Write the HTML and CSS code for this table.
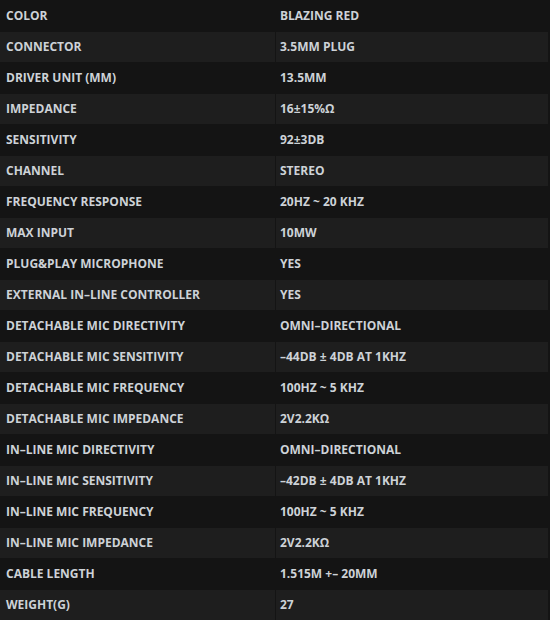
FILE: index.html
```html
<!DOCTYPE html>
<html>
<head>
<meta charset="utf-8">
<link rel="stylesheet" href="styles.css">
</head>
<body>
<table class="specs">
<tbody>
<tr><td class="k">COLOR</td><td class="v">BLAZING RED</td></tr>
<tr><td class="k">CONNECTOR</td><td class="v">3.5MM PLUG</td></tr>
<tr><td class="k">DRIVER UNIT (MM)</td><td class="v">13.5MM</td></tr>
<tr><td class="k">IMPEDANCE</td><td class="v">16±15%Ω</td></tr>
<tr><td class="k">SENSITIVITY</td><td class="v">92±3DB</td></tr>
<tr><td class="k">CHANNEL</td><td class="v">STEREO</td></tr>
<tr><td class="k">FREQUENCY RESPONSE</td><td class="v">20HZ ~ 20 KHZ</td></tr>
<tr><td class="k">MAX INPUT</td><td class="v">10MW</td></tr>
<tr><td class="k">PLUG&amp;PLAY MICROPHONE</td><td class="v">YES</td></tr>
<tr><td class="k">EXTERNAL IN–LINE CONTROLLER</td><td class="v">YES</td></tr>
<tr><td class="k">DETACHABLE MIC DIRECTIVITY</td><td class="v">OMNI–DIRECTIONAL</td></tr>
<tr><td class="k">DETACHABLE MIC SENSITIVITY</td><td class="v">–44DB ± 4DB AT 1KHZ</td></tr>
<tr><td class="k">DETACHABLE MIC FREQUENCY</td><td class="v">100HZ ~ 5 KHZ</td></tr>
<tr><td class="k">DETACHABLE MIC IMPEDANCE</td><td class="v">2V2.2KΩ</td></tr>
<tr><td class="k">IN–LINE MIC DIRECTIVITY</td><td class="v">OMNI–DIRECTIONAL</td></tr>
<tr><td class="k">IN–LINE MIC SENSITIVITY</td><td class="v">–42DB ± 4DB AT 1KHZ</td></tr>
<tr><td class="k">IN–LINE MIC FREQUENCY</td><td class="v">100HZ ~ 5 KHZ</td></tr>
<tr><td class="k">IN–LINE MIC IMPEDANCE</td><td class="v">2V2.2KΩ</td></tr>
<tr><td class="k">CABLE LENGTH</td><td class="v">1.515M +– 20MM</td></tr>
<tr><td class="k">WEIGHT(G)</td><td class="v">27</td></tr>
</tbody>
</table>
</body>
</html>
```
FILE: styles.css
```css
html, body {
  margin: 0;
  padding: 0;
  background: #141414;
}
.specs {
  width: 548px;
  border-collapse: collapse;
  font-family: "Open Sans", "DejaVu Sans", sans-serif;
  font-weight: 700;
  font-size: 12px;
  color: #cdd2d7;
}
.specs td {
  height: 28px;
  padding: 0 0 2px 6px;
  border-top: 1px solid #141414;
  vertical-align: middle;
  white-space: nowrap;
}
.specs tr:first-child td {
  border-top: 0;
  height: 30px;
  padding-bottom: 1px;
}
.specs td.k {
  width: 269px;
}
.specs td.v {
  padding-left: 4px;
  border-left: 1px solid #141414;
}
.specs tr:nth-child(even) td {
  background: #1e1e1e;
}
.specs tr:nth-child(odd) td {
  background: #141414;
}
```
